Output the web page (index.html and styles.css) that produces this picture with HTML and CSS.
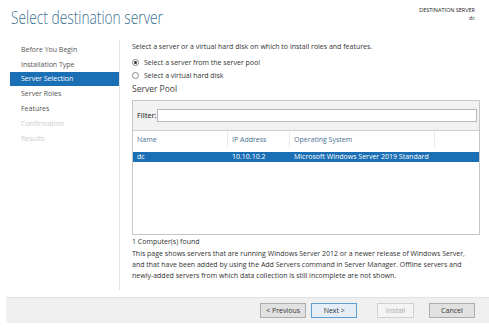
FILE: index.html
```html
<!DOCTYPE html>
<html lang="en">

<head>
    <meta charset="UTF-8">
    <title>Add Roles and Features Wizard</title>
    <link rel="stylesheet" href="styles.css">
</head>

<body>
    <!-- header -->
    <div class="top">
        <h1 class="title">Select destination server</h1>
        <div class="dest">
            <div>DESTINATION SERVER</div>
            <div>dc</div>
        </div>
    </div>

    <div class="main">
        <!-- steps -->
        <ul class="nav">
            <li>Before You Begin</li>
            <li>Installation Type</li>
            <li class="active">Server Selection</li>
            <li>Server Roles</li>
            <li>Features</li>
            <li class="off">Confirmation</li>
            <li class="off">Results</li>
        </ul>

        <!-- page content -->
        <div class="content">
            <p class="intro">Select a server or a virtual hard disk on which to install roles and features.</p>
            <label class="radio"><span class="dot on"></span>Select a server from the server pool</label>
            <label class="radio"><span class="dot"></span>Select a virtual hard disk</label>
            <h2 class="pool-title">Server Pool</h2>

            <div class="pool">
                <div class="filter">
                    <span>Filter:</span>
                    <div class="input"></div>
                </div>
                <div class="head">
                    <div class="col c1">Name</div>
                    <div class="col c2">IP Address</div>
                    <div class="col c3">Operating System</div>
                    <div class="col c4"></div>
                </div>
                <div class="row sel">
                    <div class="col c1">dc</div>
                    <div class="col c2">10.10.10.2</div>
                    <div class="col c3">Microsoft Windows Server 2019 Standard</div>
                </div>
            </div>
            <p class="found">1 Computer(s) found</p>
            <p class="note">This page shows servers that are running Windows Server 2012 or a newer release of Windows Server, and that have been added by using the Add Servers command in Server Manager. Offline servers and newly-added servers from which data collection is still incomplete are not shown.</p>
        </div>
    </div>

    <!-- buttons -->
    <div class="footer">
        <button class="btn">&lt; Previous</button>
        <button class="btn next">Next &gt;</button>
        <button class="btn off">Install</button>
        <button class="btn">Cancel</button>
    </div>
</body>

</html>
```

FILE: styles.css
```css
* {
    margin: 0;
    padding: 0;
    box-sizing: border-box;
}

body {
    width: 489px;
    height: 332px;
    background: #fff;
    font-family: "Open Sans", "Noto Sans", sans-serif;
    font-size: 7px;
    color: #333;
    overflow: hidden;
}

.top {
    display: flex;
    justify-content: space-between;
    padding: 4px 14px 0 11px;
    height: 40px;
}

.title {
    font-weight: 300;
    font-size: 19px;
    color: #3b7090;
    white-space: nowrap;
    /* screenshot text is narrow */
    transform: scaleX(0.725);
    transform-origin: left top;
}

.dest {
    text-align: right;
    font-size: 5.5px;
    line-height: 8px;
    padding-top: 2px;
    color: #222;
}

.main {
    display: flex;
    height: 250px;
}

.nav {
    list-style: none;
    width: 110px;
    margin-left: 10px;
    padding-top: 2px;
    border-right: 1px solid #e3e3e3;
    height: 250px;
}

.nav li {
    height: 15px;
    line-height: 15px;
    padding-left: 11px;
    color: #555;
}

.nav li.active {
    background: #1a6fb5;
    color: #fff;
    height: 14px;
    line-height: 14px;
}

.nav li.off {
    color: #ccc;
}

.content {
    flex: 1;
    padding: 2px 9px 0 12px;
}

.intro {
    line-height: 10px;
    margin-bottom: 4px;
}

.radio {
    display: flex;
    align-items: center;
    height: 12px;
    margin-bottom: 1px;
}

.dot {
    width: 7px;
    height: 7px;
    border: 1px solid #888;
    border-radius: 50%;
    margin-right: 5px;
    position: relative;
}

.dot.on::after {
    content: "";
    position: absolute;
    left: 1px;
    top: 1px;
    width: 3px;
    height: 3px;
    border-radius: 50%;
    background: #333;
}

.pool-title {
    font-weight: normal;
    font-size: 8.5px;
    line-height: 13px;
    color: #444;
    height: 13px;
    margin-bottom: 5px;
}

.pool {
    border: 1px solid #c6c6c6;
    height: 135px;
}

.filter {
    display: flex;
    align-items: center;
    background: #f2f2f2;
    height: 30px;
    padding: 0 2px 0 4px;
    border-bottom: 1px solid #cfcfcf;
}

.filter span {
    font-weight: 600;
    color: #444;
    width: 20px;
}

.input {
    flex: 1;
    height: 13px;
    background: #fff;
    border: 1px solid #b9b9b9;
}

.head,
.row {
    display: flex;
}

.head {
    height: 17px;
    color: #4a6f94;
}

.head .col {
    border-right: 1px solid #ebebeb;
    height: 17px;
    line-height: 17px;
}

.head .c4 {
    border-right: none;
}

.col {
    padding-left: 4px;
    white-space: nowrap;
}

.c1 {
    width: 95px;
}

.c2 {
    width: 62px;
}

.c3 {
    width: 145px;
}

.row {
    height: 10px;
    line-height: 10px;
    margin-top: 4px;
}

.row.sel {
    background: #1a6fb5;
    color: #fff;
}

.found {
    line-height: 11px;
    margin-top: 1px;
}

.note {
    line-height: 11px;
    margin-top: 1px;
    padding-right: 12px;
}

.footer {
    display: flex;
    align-items: center;
    margin: 7px 0 0 6px;
    height: 26px;
    background: #f0f0f0;
    border-top: 1px solid #e2e2e2;
    padding: 0 9px 0 254px;
}

.btn {
    width: 48px;
    height: 15px;
    margin-right: 5px;
    font-family: inherit;
    font-size: 7px;
    color: #333;
    background: #e1e1e1;
    border: 1px solid #adadad;
}

.btn.next {
    border-color: #5a9fd6;
    background: #e5eef7;
    margin-right: 20px;
}

.btn.off {
    width: 38px;
    color: #aaa;
    background: #f4f4f4;
    border-color: #d0d0d0;
    margin-right: 15px;
}
```
